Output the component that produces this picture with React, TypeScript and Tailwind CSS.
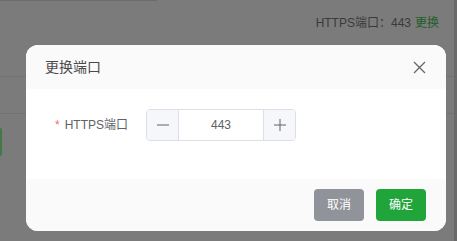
import React from "react"

const font = { fontFamily: '"Liberation Sans", "Noto Sans CJK SC", sans-serif' }

function PortInput({ value }: { value: number }) {
    return (
        <div className="flex h-[32px] w-[150px] overflow-hidden rounded-[4px] border border-[#dcdfe6] bg-white">
            {/* minus */}
            <div className="flex w-[32px] items-center justify-center border-r border-[#dcdfe6] bg-[#f5f7fa]">
                <svg width="12" height="12" viewBox="0 0 12 12">
                    <line x1="0" y1="6" x2="12" y2="6" stroke="#606266" strokeWidth="1" />
                </svg>
            </div>
            <div className="flex flex-1 items-center justify-center text-[12px] text-[#606266]">
                {value}
            </div>
            {/* plus */}
            <div className="flex w-[32px] items-center justify-center border-l border-[#dcdfe6] bg-[#f5f7fa]">
                <svg width="12" height="12" viewBox="0 0 12 12">
                    <line x1="0" y1="6" x2="12" y2="6" stroke="#606266" strokeWidth="1" />
                    <line x1="6" y1="0" x2="6" y2="12" stroke="#606266" strokeWidth="1" />
                </svg>
            </div>
        </div>
    )
}

export default function App() {
    return (
        <div className="relative flex h-[241px] w-[457px] overflow-hidden bg-[#7b7b7b]" style={font}>
            {/* page behind the mask */}
            <div className="flex flex-1 flex-col">
                <div className="h-px w-[157px] bg-[#6b6b6b]" />
                <div className="mt-[14px] flex justify-end pr-[15px] text-[12px] leading-[16px] text-[#3a3a3a]">
                    <span>HTTPS端口：443</span>
                    <span className="ml-[4px] text-[#1d5e27]">更换</span>
                </div>
                <div className="mt-[45px] h-px w-full bg-[#717171]" />
                <div className="mt-[36px] h-px w-full bg-[#717171]" />
                <div className="mt-[14px] h-[28px] w-[2px] rounded-r-[2px] bg-[#3f7a48]" />
            </div>
            <div className="w-[3px] bg-[#6a6a6a]" />

            {/* dialog */}
            <div className="absolute left-[26px] top-[45px] flex h-[186px] w-[420px] flex-col overflow-hidden rounded-[12px] bg-white">
                <div className="flex h-[44px] items-center justify-between bg-[#fafafa] pl-[19px] pr-[20px]">
                    <span className="text-[14px] text-[#4a4a4a]">更换端口</span>
                    <svg width="13" height="13" viewBox="0 0 13 13">
                        <path d="M1 1 L12 12 M12 1 L1 12" stroke="#666" strokeWidth="1.3" />
                    </svg>
                </div>
                <div className="flex h-[90px] items-start bg-white pl-[29px] pt-[20px]">
                    <div className="flex h-[32px] w-[91px] items-center text-[12px] text-[#606266]">
                        <span className="mr-[5px] text-[#f56c6c]">*</span>
                        <span>HTTPS端口</span>
                    </div>
                    <PortInput value={443} />
                </div>
                <div className="flex flex-1 items-start justify-end gap-[12px] bg-[#fafafa] pr-[20px] pt-[10px]">
                    <button className="h-[32px] w-[50px] rounded-[4px] bg-[#909399] text-[12px] text-white">
                        取消
                    </button>
                    <button className="h-[32px] w-[50px] rounded-[4px] bg-[#20a53a] text-[12px] text-white">
                        确定
                    </button>
                </div>
            </div>
        </div>
    )
}
